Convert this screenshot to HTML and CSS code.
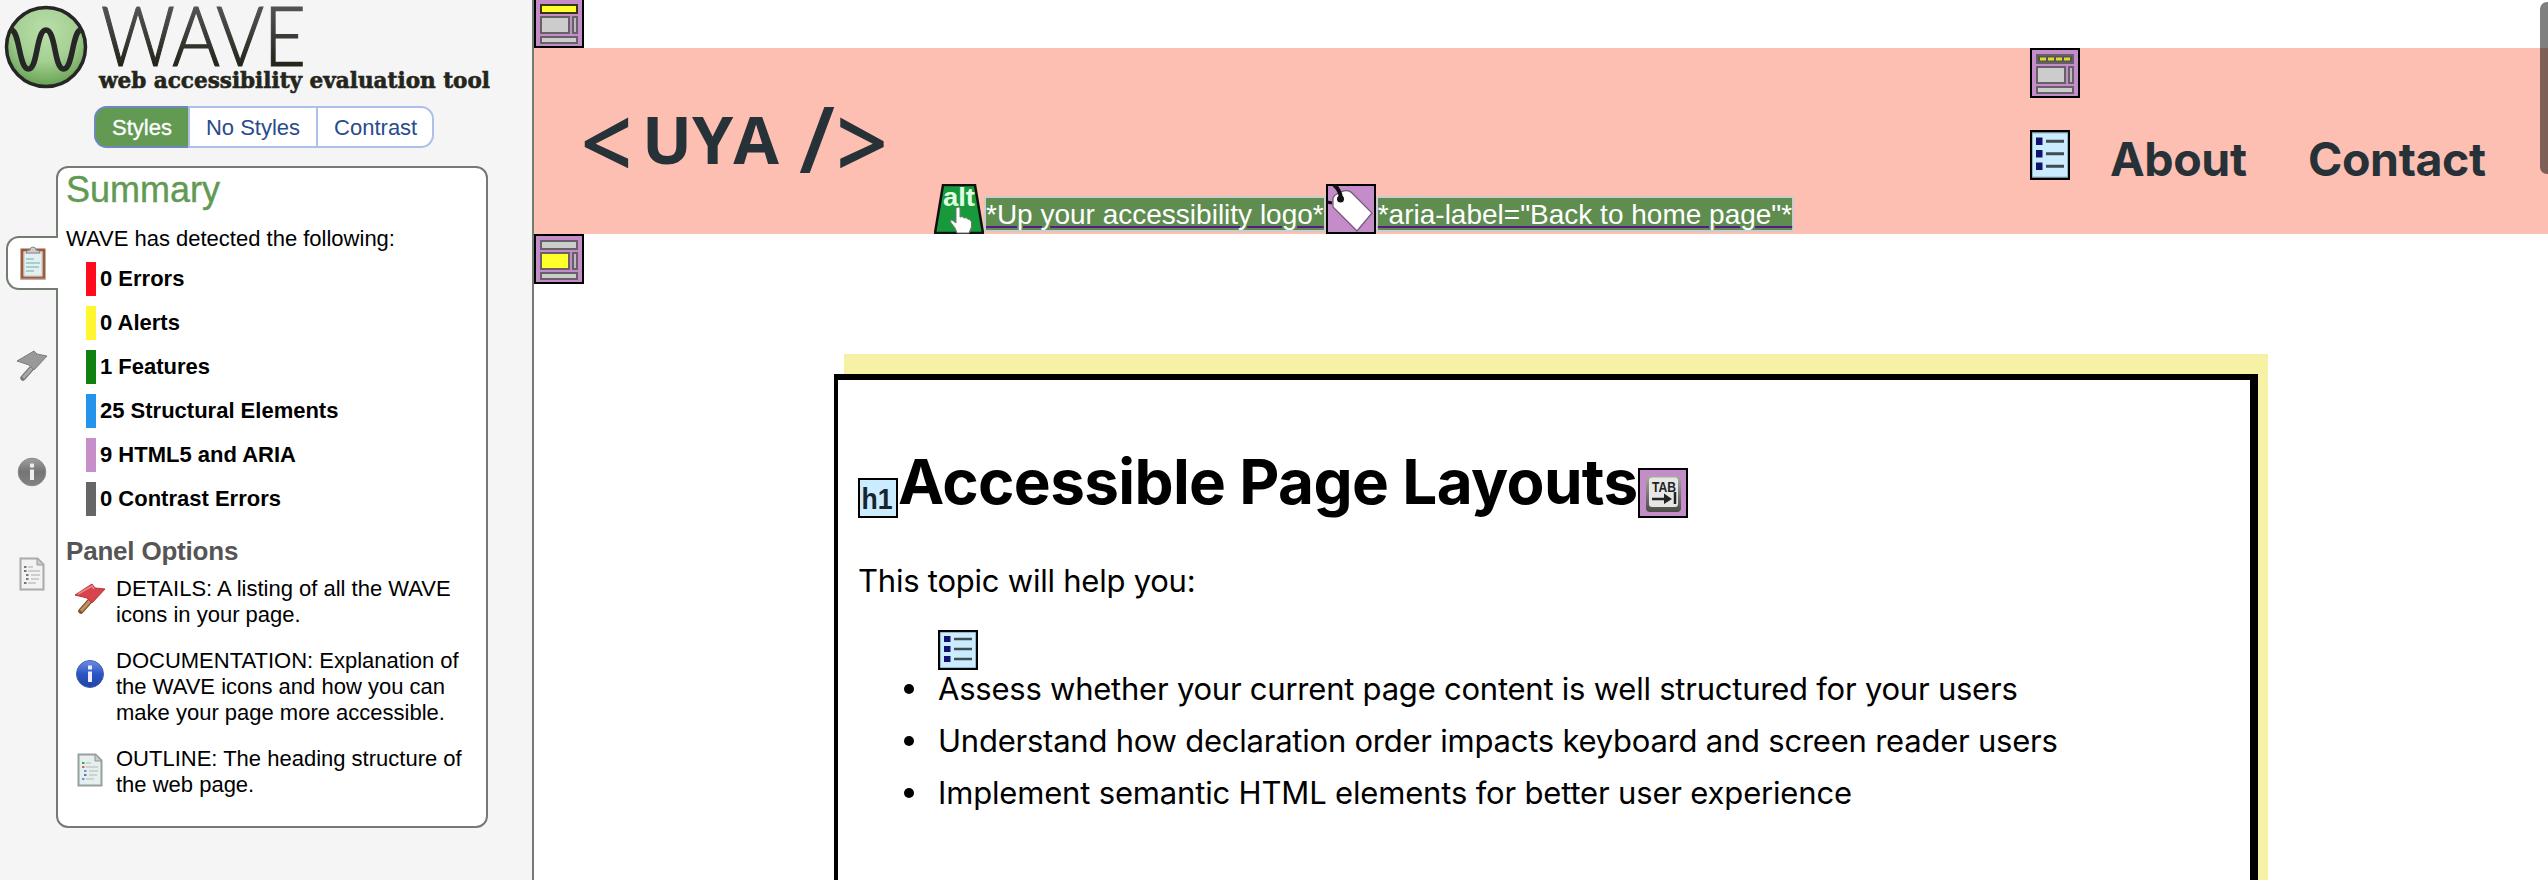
FILE: index.html
```html
<!DOCTYPE html>
<html lang="en">
<head>
<meta charset="utf-8">
<title>WAVE - Accessible Page Layouts</title>
<link rel="stylesheet" href="styles.css">
</head>
<body>
<svg class="defs" width="0" height="0" aria-hidden="true">
  <defs>
    <linearGradient id="wordmark" x1="0" y1="0" x2="0" y2="1"><stop offset=".2" stop-color="#555"/><stop offset=".8" stop-color="#24261c"/></linearGradient>
    <radialGradient id="ball" cx=".5" cy=".3" r=".75"><stop offset="0" stop-color="#b9dfa9"/><stop offset=".5" stop-color="#a5d093"/><stop offset="1" stop-color="#5e9a49"/></radialGradient>
    <linearGradient id="blue" x1="0" y1="0" x2="0" y2="1"><stop offset="0" stop-color="#6c8fe2"/><stop offset=".5" stop-color="#2b55c4"/><stop offset="1" stop-color="#2342a4"/></linearGradient>
    <linearGradient id="gray" x1="0" y1="0" x2="0" y2="1"><stop offset="0" stop-color="#a0a0a0"/><stop offset=".5" stop-color="#747474"/><stop offset="1" stop-color="#838383"/></linearGradient>
    <linearGradient id="keycap" x1="0" y1="0" x2="0" y2="1"><stop offset="0" stop-color="#aaaaa2"/><stop offset="1" stop-color="#4b4b43"/></linearGradient>
    <symbol id="list" viewBox="0 0 40 40" preserveAspectRatio="none">
      <rect x="1" y="1" width="38" height="38" fill="#cbecff" stroke="#000" stroke-width="2"/>
      <rect x="2.3" y="2.3" width="35.4" height="35.4" fill="none" stroke="#7d98a5" stroke-width=".7"/>
      <path d="M6 6h6.5v6H6zM6 16h6.5v6H6zM6 26h6.5v6H6z" fill="#12126e"/>
      <path d="M16 9h18M16 19h18M16 29h18" stroke="#414b52" stroke-width="2.4"/>
    </symbol>
  </defs>
</svg>
<div class="app">
  <aside class="sidebar">
    <div class="brand">
      <svg width="500" height="100" viewBox="0 0 500 100" role="img" aria-label="WAVE">
        <circle cx="46" cy="47" r="39.5" fill="url(#ball)" stroke="#262626" stroke-width="3.5"/>
        <path d="M12 30C20 34 19 69 28.500 69C38 69 36 30 46 30C56 30 54 69 63.500 69C73 69 72 34 80 30" fill="none" stroke="#262626" stroke-width="5.500"/>
        <text class="wordmark" x="101" y="66" textLength="205" lengthAdjust="spacingAndGlyphs">WAVE</text>
        <text class="tagline" x="99" y="87.500" textLength="391" lengthAdjust="spacingAndGlyphs">web accessibility evaluation tool</text>
      </svg>
    </div>
    <div class="modes"><span class="mode active">Styles</span><span class="mode">No Styles</span><span class="mode">Contrast</span></div>
    <div class="panels">
      <div class="rail">
        <div class="tab">
          <svg width="28" height="34" viewBox="0 0 28 34"><path d="M3 4h22v28H3z" fill="#fff" stroke="#9a5c3c" stroke-width="3"/><path d="M5 7h18v23H5z" fill="#e4efef" stroke="#aaa" stroke-width=".6"/><path d="M7 13h8M7 17h14M7 21h13M7 25h8" stroke="#a8cfd0" stroke-width="2"/><path d="M7 7q0-3 4-3q0-3 3-3t3 3q4 0 4 3z" fill="#ccc" stroke="#888"/><path d="M1 33h26" stroke="#b9aca6"/></svg>
        </div>
        <svg class="rail-flag" width="32" height="31" viewBox="0 0 32 31"><path d="M22 11L7 28" stroke="#777" stroke-width="5.500" stroke-linecap="round"/><path d="M22 11L7 28" stroke="#a8a8a8" stroke-width="3"/><path d="M1 11L18 1L21 4L31 6L18 20L13 15z" fill="#999" stroke="#7c7c7c"/></svg>
        <svg class="rail-info" width="30" height="30" viewBox="0 0 30 30"><circle cx="15" cy="15" r="13.800" fill="url(#gray)" stroke="#888"/><path d="M13 6.500h4v4h-4zM13 12.500h4V23h-4z" fill="#eee"/></svg>
        <svg class="rail-doc" width="26" height="34" viewBox="0 0 26 34"><path d="M1.500 1.500h17l6 6V32.500h-23z" fill="#f2f2f2" stroke="#aaa" stroke-width="2"/><path d="M18 2v6h6" fill="#ccc" stroke="#999"/><path d="M9 10h5M9 14h12M12 18h9M12 22h8M9 26h8" stroke="#c2c2c2" stroke-width="1.500"/><path d="M5 10h2.500M5 14h2.500M7 18h2.500M7 22h2.500M5 26h2.500" stroke="#777" stroke-width="2"/></svg>
      </div>
      <section class="panel">
        <h2 class="title">Summary</h2>
        <p class="lead">WAVE has detected the following:</p>
        <ul class="counts">
          <li class="errors">0 Errors</li>
          <li class="alerts">0 Alerts</li>
          <li class="features">1 Features</li>
          <li class="structure">25 Structural Elements</li>
          <li class="aria">9 HTML5 and ARIA</li>
          <li class="contrast">0 Contrast Errors</li>
        </ul>
        <h3 class="subtitle">Panel Options</h3>
        <div class="options">
          <div class="option"><svg class="oflag" width="32" height="32" viewBox="0 0 32 32"><path d="M22 11L7 28" stroke="#76512f" stroke-width="5.500" stroke-linecap="round"/><path d="M22 11L7 28" stroke="#c4935a" stroke-width="3"/><path d="M1 12L18 1L21 5L31 6L18 20L13 15z" fill="#d9444c" stroke="#b5343a"/><path d="M4 11L18 3L20 6" fill="none" stroke="#ee8587" stroke-width="1.500"/></svg><p>DETAILS: A listing of all the WAVE<br>icons in your page.</p></div>
          <div class="option"><svg class="oinfo" width="32" height="30" viewBox="0 0 32 30"><circle cx="16" cy="15" r="13.500" fill="url(#blue)" stroke="#4460b4"/><path d="M14 6.500h4v4h-4zM14 12.500h4V23h-4z" fill="#eef"/></svg><p>DOCUMENTATION: Explanation of<br>the WAVE icons and how you can<br>make your page more accessible.</p></div>
          <div class="option"><svg class="odoc" width="32" height="34" viewBox="-3 0 32 34"><path d="M1.500 1.500h17l6 6V32.500h-23z" fill="#e6efee" stroke="#94a19e" stroke-width="2"/><path d="M18 2v6h6" fill="#c7d2d0" stroke="#899593"/><path d="M9 10h5M9 14h12M12 18h9M12 22h8M9 26h8" stroke="#c2cccb" stroke-width="1.500"/><path d="M5 10h2.500" stroke="#2bb52b" stroke-width="2"/><path d="M5 14h2.500" stroke="#d66" stroke-width="2"/><path d="M7 18h2.500M5 26h2.500" stroke="#59f" stroke-width="2"/><path d="M7 22h2.500" stroke="#777" stroke-width="2"/></svg><p>OUTLINE: The heading structure of<br>the web page.</p></div>
        </div>
      </section>
    </div>
  </aside>
  <div class="page">
    <div class="top"><svg width="50" height="50" viewBox="0 0 50 50"><rect x="1" y="1" width="48" height="48" fill="#c58cca" stroke="#000" stroke-width="2"/><g stroke="#676067" stroke-width="2"><rect x="7" y="7" width="36" height="8" fill="#ffff2b" stroke="#36350b"/><rect x="7" y="19" width="28" height="16" fill="#ccc"/><rect x="39" y="19" width="4" height="16" fill="#bbb"/><rect x="7" y="39" width="36" height="6" fill="#ccc"/></g></svg></div>
    <header class="banner">
      <svg class="uya" width="310" height="90" viewBox="0 0 310 90" role="img" aria-label="UYA logo"><g class="uya-text"><text x="-3.500" y="83" textLength="52" lengthAdjust="spacingAndGlyphs" class="bracket">&lt;</text><text x="58" y="68" textLength="137" lengthAdjust="spacingAndGlyphs">UYA</text><text x="215" y="77" textLength="36" lengthAdjust="spacingAndGlyphs" class="slash">/</text><text x="252" y="83" textLength="52" lengthAdjust="spacingAndGlyphs" class="bracket">&gt;</text></g></svg>
      <div class="labels">
        <svg width="50" height="50" viewBox="0 0 50 50"><path d="M9 1H41L49 49H1z" fill="#189a3c" stroke="#111" stroke-width="2.500"/><text class="alt-text" x="9" y="22" textLength="32" lengthAdjust="spacingAndGlyphs">alt</text><path d="M22 24q2.500-2 4 0v9q3-1 4 1q3-1 3.500 1q3 0 4 3v5L35 49H23q-1-5-5-9q-3-4 0-4l4 3z" fill="#fff" stroke="#777"/></svg>
        <span class="label">*Up your accessibility logo*</span>
        <svg width="50" height="50" viewBox="0 0 50 50"><rect x="1" y="1" width="48" height="48" fill="#c58cca" stroke="#000" stroke-width="2"/><path d="M7 17Q6 14 9 11L15 8Q22 5 26 9L46 29L31 47L7 23z" fill="#fff" stroke="#76557a" stroke-width="1.200"/><path d="M8 1Q14 6 15 14" fill="none" stroke="#111" stroke-width="4"/><circle cx="14.500" cy="15" r="3.500" fill="#111"/><path d="M1 18l5 1" stroke="#111" stroke-width="3"/></svg>
        <span class="label">*aria-label="Back to home page"*</span>
      </div>
      <nav class="nav">
        <svg width="46" height="50" viewBox="0 0 50 50" preserveAspectRatio="none" class="nav-mark"><rect x="1" y="1" width="48" height="48" fill="#c58cca" stroke="#000" stroke-width="2"/><g stroke="#676067" stroke-width="2"><rect x="7" y="7" width="36" height="8" fill="#555"/><path d="M10 11h6M18 11h6M26 11h6M34 11h6" stroke="#dddb28" stroke-width="3"/><rect x="7" y="19" width="28" height="16" fill="#ccc"/><rect x="39" y="19" width="4" height="16" fill="#bbb"/><rect x="7" y="39" width="36" height="6" fill="#ccc"/></g></svg>
        <div class="links"><svg width="40" height="50"><use href="#list" width="40" height="50"/></svg><a class="about">About</a><a class="contact">Contact</a></div>
      </nav>
    </header>
    <main>
      <svg class="main-mark" width="50" height="50" viewBox="0 0 50 50"><rect x="1" y="1" width="48" height="48" fill="#c58cca" stroke="#000" stroke-width="2"/><g stroke="#676067" stroke-width="2"><rect x="7" y="7" width="36" height="8" fill="#ccc"/><rect x="7" y="19" width="28" height="16" fill="#ffff2b"/><rect x="39" y="19" width="4" height="16" fill="#bbb"/><rect x="7" y="39" width="36" height="6" fill="#ccc"/></g></svg>
      <article class="card">
        <div class="heading">
          <svg width="40" height="40" viewBox="0 0 40 40"><rect x="1" y="1" width="38" height="38" fill="#cbecff" stroke="#000" stroke-width="2"/><text class="h1-text" x="3.500" y="31" textLength="31" lengthAdjust="spacingAndGlyphs">h1</text></svg>
          <h1>Accessible Page Layouts</h1>
          <svg class="tabkey" width="50" height="50" viewBox="0 0 50 50"><rect x="1" y="1" width="48" height="48" fill="#c58cca" stroke="#000" stroke-width="2"/><rect x="8" y="8" width="35" height="36" rx="4" fill="url(#keycap)"/><rect x="11" y="9.500" width="29" height="29.500" rx="3" fill="#e6e6e6"/><text class="tab-text" x="14" y="24" textLength="24" lengthAdjust="spacingAndGlyphs">TAB</text><path d="M14 31h14M37 24v12" stroke="#222" stroke-width="2.500"/><path d="M26 25.500L34 31L26 36z" fill="#222"/></svg>
        </div>
        <p class="intro">This topic will help you:</p>
        <svg class="list-mark" width="40" height="40"><use href="#list" width="40" height="40"/></svg>
        <ul class="goals">
          <li>Assess whether your current page content is well structured for your users</li>
          <li>Understand how declaration order impacts keyboard and screen reader users</li>
          <li class="wide">Implement semantic HTML elements for better user experience</li>
        </ul>
      </article>
    </main>
  </div>
</div>
<div class="scrollbar"></div>
</body>
</html>
```
FILE: styles.css
```css
* { box-sizing: border-box; }
body, h1, h2, h3, p, ul { margin: 0; padding: 0; }
ul { list-style: none; }
svg { display: block; flex: none; }
.defs { position: absolute; }
body { background: #fff; font-family: "Liberation Sans", Arial, sans-serif; color: #000; overflow: hidden; }
.app { display: flex; height: 880px; overflow: hidden; }

/* Sidebar */
.sidebar { flex: none; width: 534px; background: #f5f5f5; border-right: 2px solid #737c70; font-size: 22px; }
.brand { height: 106px; }
.wordmark { font: 300 82px Lato, sans-serif; fill: url(#wordmark); stroke: url(#wordmark); stroke-width: 1.2px; }
.tagline { font: bold 22px "DejaVu Serif", serif; fill: #24261c; stroke: #24261c; stroke-width: .6px; }
.modes { display: flex; width: 340px; height: 42px; margin-left: 94px; line-height: 39px; border: 2px solid #adc0ea; border-radius: 13px; background: #fff; color: #2a4b8d; }
.mode { padding: 0 16px; border-left: 2px solid #adc0ea; white-space: nowrap; }
.mode.active { margin: -2px 0 -2px -2px; border: 2px solid #6d89bb; border-right: 0; border-radius: 13px 0 0 13px; background: #629a54; color: #fff; -webkit-text-stroke: .3px #fff; }
.panels { display: flex; margin-top: 18px; }
.rail { flex: none; width: 56px; padding: 70px 0 0 6px; }
.tab { position: relative; width: 52px; height: 54px; padding: 8px 0 0 11px; background: #fff; border: 2px solid #737c70; border-right: 0; border-radius: 13px 0 0 13px; }
.rail-flag { margin: 60px 0 0 10px; }
.rail-info { margin: 76px 0 0 11px; }
.rail-doc { margin: 70px 0 0 13px; }
.panel { width: 432px; height: 662px; padding: 2px 0 0 8px; background: #fff; border: 2px solid #737c70; border-radius: 12px; }
.title { font-size: 36px; line-height: 40px; font-weight: 400; color: #629a54; -webkit-text-stroke: .4px #629a54; }
.lead { margin-top: 16px; line-height: 26px; }
.counts { display: flex; flex-direction: column; gap: 10px; margin: 10px 0 0 20px; font-weight: 700; }
.counts li { height: 34px; padding-left: 4px; line-height: 33px; border-left: 10px solid; border-color: var(--c); }
.errors { --c: #ff0b1b; }
.alerts { --c: #fff530; }
.features { --c: #108010; }
.structure { --c: #2493ec; }
.aria { --c: #c78fc9; }
.contrast { --c: #666; }
.subtitle { margin-top: 20px; font-size: 26px; line-height: 30px; color: #555; letter-spacing: -.2px; }
.options { display: flex; flex-direction: column; gap: 20px; margin: 10px 0 0 8px; }
.option { display: flex; gap: 10px; line-height: 26px; white-space: nowrap; }
.oflag { margin-top: 7px; }
.oinfo { margin-top: 11px; }
.odoc { margin-top: 7px; }

/* Evaluated page */
.page { flex: 1; min-width: 0; font-family: Inter, sans-serif; }
.top { display: flex; align-items: flex-end; height: 48px; }
.banner { display: flex; height: 186px; background: #fdbfb1; color: #263238; }
.uya { margin: 48px 0 0 50px; overflow: visible; }
.uya-text { font: bold 67px "Open Sans", sans-serif; fill: #263238; }
.bracket { font-size: 100px; font-weight: 600; }
.slash { font-size: 92px; font-weight: 600; }
.labels { display: flex; align-items: flex-end; margin-left: 40px; font-family: "Liberation Sans", Arial, sans-serif; }
.alt-text { font: bold 26px "Liberation Sans", sans-serif; fill: #e3ffe3; }
.label { height: 36px; margin-bottom: 2px; border: 2px solid #ccc; background: #5f8c4f; color: #fff; font-size: 28px; line-height: 33px; white-space: nowrap; text-decoration: underline #551a8b 2px; text-underline-offset: 2px; }
.nav { width: 518px; margin-left: auto; }
.nav-mark { width: 50px; }
.links { display: flex; margin-top: 32px; font-size: 46.500px; font-weight: 700; line-height: 58px; letter-spacing: -.4px; }
.about { margin-left: 40px; width: 198px; }
.main-mark { margin-bottom: 90px; }
.card { width: 1424px; height: 640px; margin-left: 300px; padding: 88px 20px 0; border: solid #000; border-width: 6px 8px 0 4px; background: #fff; box-shadow: 10px -20px 0 #f7f1a5; }
.heading { display: flex; align-items: flex-end; height: 50px; }
.heading h1 { width: 740px; font-size: 62px; line-height: 76px; font-weight: 700; letter-spacing: -.65px; margin-bottom: -2px; white-space: nowrap; }
.h1-text { font: bold 30px "Liberation Sans", sans-serif; fill: #18242b; }
.tab-text { font: bold 14px "Liberation Sans", sans-serif; fill: #222; }
.intro { margin-top: 37px; font-size: 31px; line-height: 52px; letter-spacing: -.23px; }
.list-mark { margin: 23px 0 0 80px; }
.goals { margin: -7px 0 0 80px; font-size: 31px; line-height: 52px; letter-spacing: -.23px; white-space: nowrap; }
.goals .wide { letter-spacing: -.17px; }
.goals li { display: flex; align-items: center; }
.goals li::before { content: ""; width: 10px; height: 10px; margin: 0 24px 0 -34px; border-radius: 50%; background: #000; }
.scrollbar { position: absolute; top: 2px; right: 0; width: 8px; height: 172px; border-radius: 7px 0 0 7px; background: rgba(0, 0, 0, .5); }
```
